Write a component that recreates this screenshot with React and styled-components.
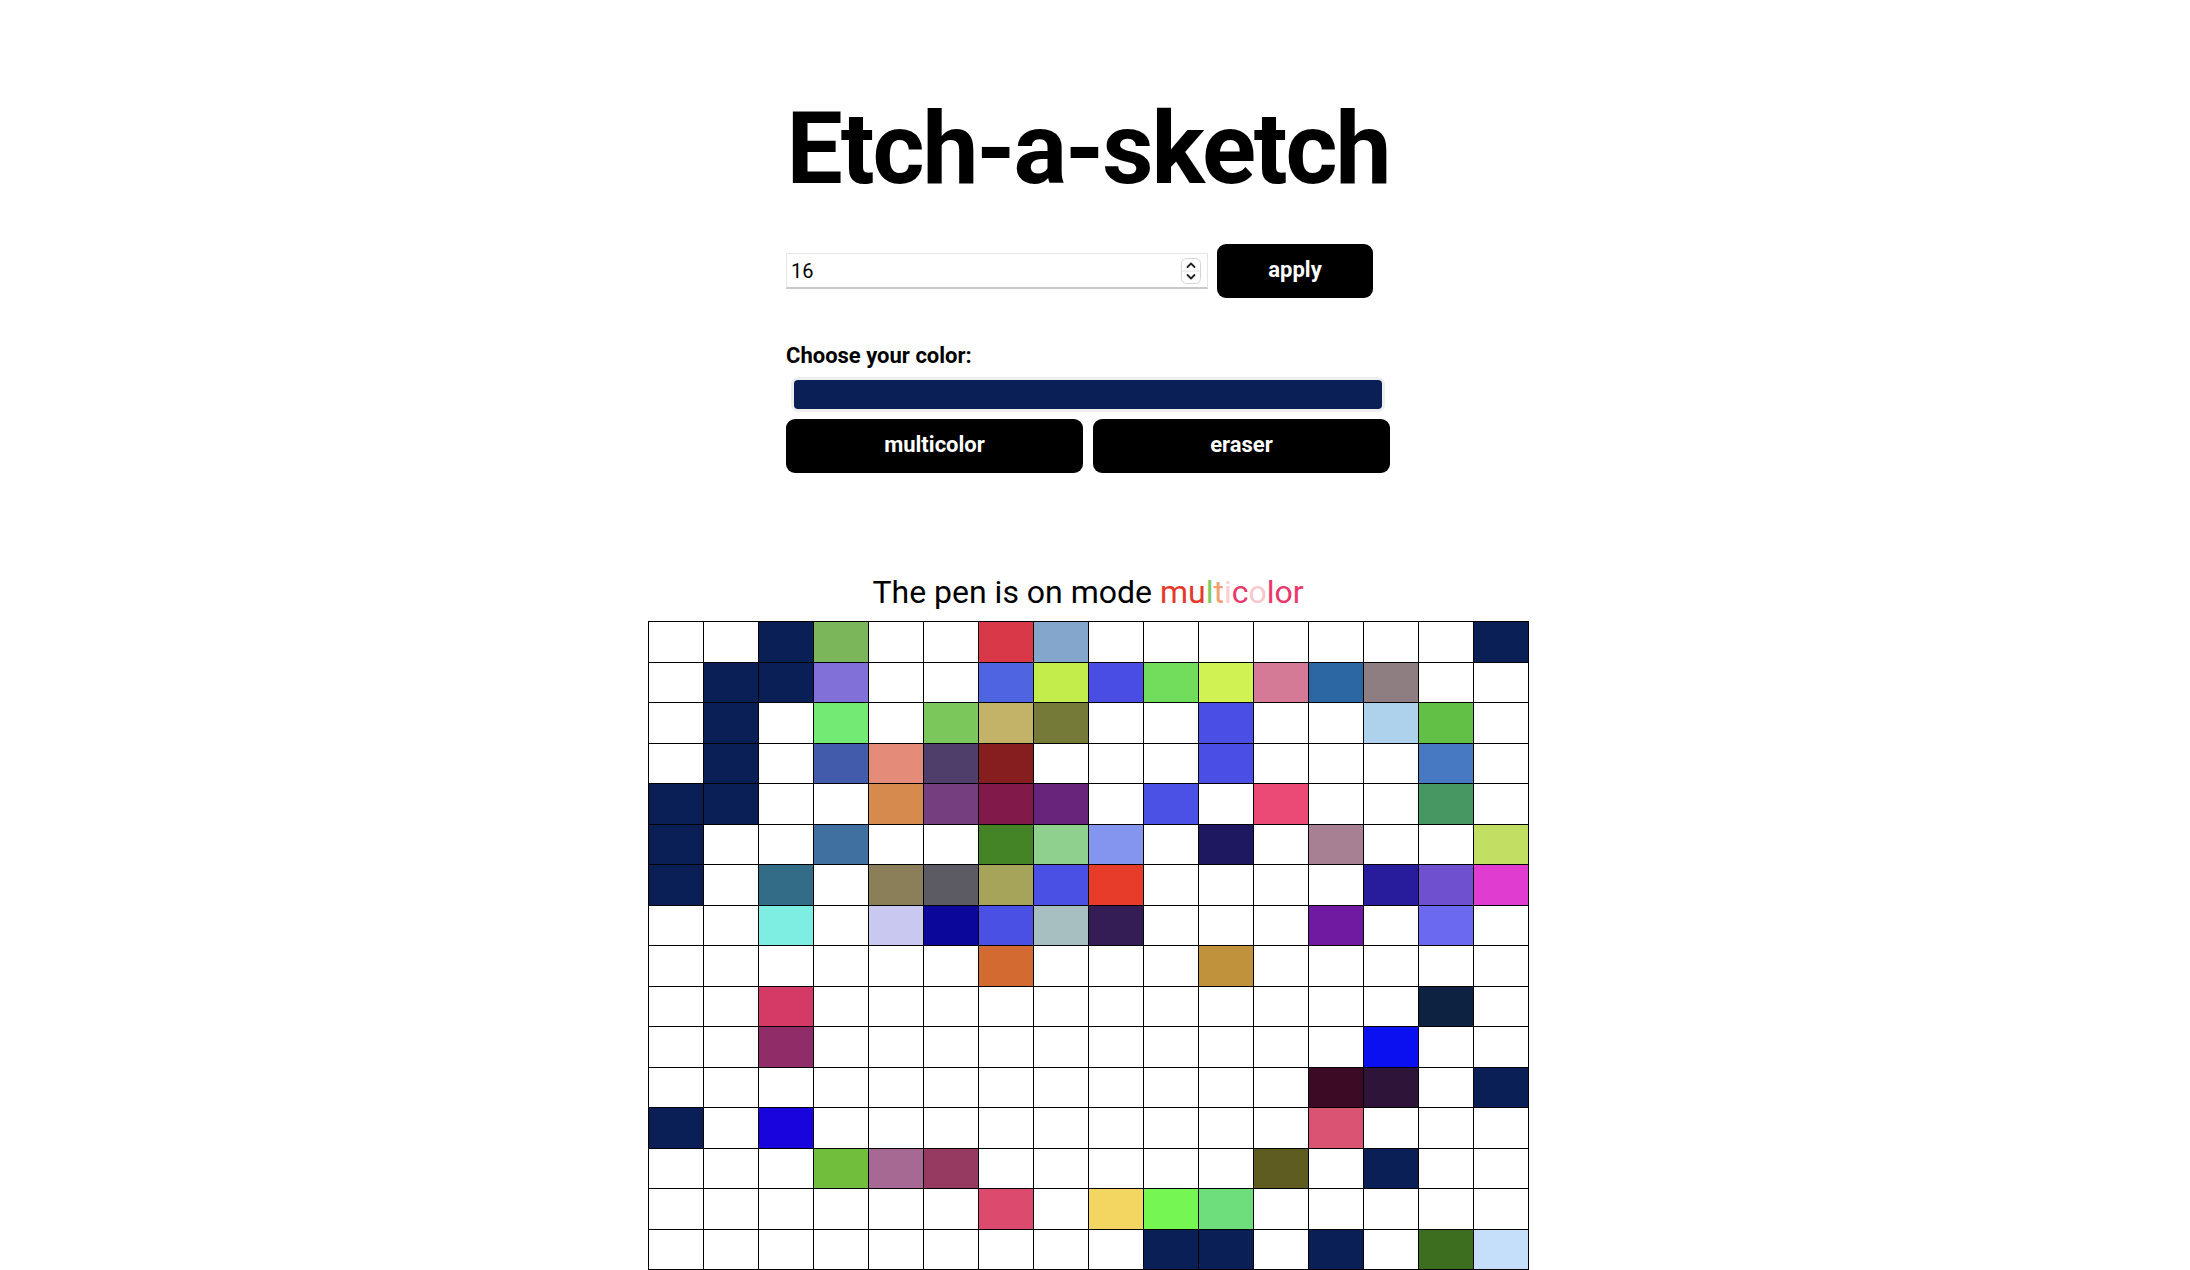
import React from 'react'
import styled, { createGlobalStyle } from 'styled-components'

const N = '#0a1f55'

const board = [
  ['', '', N, '#7bb65a', '', '', '#d93848', '#84a6cc', '', '', '', '', '', '', '', N],
  ['', N, N, '#8070d8', '', '', '#4f64e0', '#c2ed4b', '#4a4de4', '#72dc5c', '#d0f253', '#d57a96', '#2d67a3', '#8e7e82', '', ''],
  ['', N, '', '#73ea74', '', '#7cc75c', '#c2b368', '#767a38', '', '', '#4a4ee4', '', '', '#afd2ec', '#62c046', ''],
  ['', N, '', '#425cab', '#e48b7a', '#4e3e69', '#861e20', '', '', '', '#4a4ee4', '', '', '', '#4779c2', ''],
  [N, N, '', '', '#d78a4e', '#753f7f', '#811a4a', '#68247a', '', '#4a51e4', '', '#ea4a75', '', '', '#479763', ''],
  [N, '', '', '#3f70a0', '', '', '#448426', '#90d08e', '#8495f0', '', '#1e1860', '', '#a78094', '', '', '#c2de63'],
  [N, '', '#336c87', '', '#8a7f59', '#5c5b63', '#a6a35a', '#4a50e4', '#e83c2a', '', '', '', '', '#281c9c', '#6f50ce', '#e03dd0'],
  ['', '', '#7eeee2', '', '#c9c8f0', '#0a079a', '#4b50e4', '#a7bfc1', '#341c55', '', '', '', '#6f1aa0', '', '#6a69f0', ''],
  ['', '', '', '', '', '', '#d36a32', '', '', '', '#c0923c', '', '', '', '', ''],
  ['', '', '#d53a66', '', '', '', '', '', '', '', '', '', '', '', '#0c2240', ''],
  ['', '', '#902d68', '', '', '', '', '', '', '', '', '', '', '#0a10f0', '', ''],
  ['', '', '', '', '', '', '', '', '', '', '', '', '#3c0a24', '#2e1438', '', N],
  [N, '', '#1a04de', '', '', '', '', '', '', '', '', '', '#da5372', '', '', ''],
  ['', '', '', '#70be3c', '#a66994', '#963a62', '', '', '', '', '', '#5e5c20', '', N, '', ''],
  ['', '', '', '', '', '', '#dc4a6e', '', '#f3d562', '#76f652', '#6ede7c', '', '', '', '', ''],
  ['', '', '', '', '', '', '', '', '', N, N, '', N, '', '#3d6e20', '#c5dffa'],
]

const rainbow = [
  ['m', '#e5392b'], ['u', '#e5392b'], ['l', '#7ccb5e'], ['t', '#f2a06e'], ['i', '#f9cfd0'],
  ['c', '#e8386b'], ['o', '#f8c8cc'], ['l', '#e8386b'], ['o', '#e8386b'], ['r', '#ec3a6c'],
]

const GlobalStyle = createGlobalStyle`
  * { box-sizing: border-box; }
  body {
    margin: 0;
    background: #fff;
    font-family: Roboto, "Liberation Sans", sans-serif;
    color: #000;
  }
`

const Page = styled.div`
  width: 2176px;
  display: flex;
  flex-direction: column;
  align-items: center;
`

const Title = styled.h1`
  margin: 99px 0 0;
  font-size: 100px;
  line-height: 100px;
  font-weight: 700;
  letter-spacing: -2.1px;
`

const Controls = styled.div`
  width: 604px;
  display: flex;
  flex-direction: column;
  margin-top: 45px;
`

const SizeRow = styled.div`
  display: flex;
  align-items: center;
  gap: 9px;
`

const NumberField = styled.div`
  position: relative;
  width: 422px;
  height: 36px;
  border: 1px solid #e6e6e6;
  border-bottom: 2px solid #c9c9c9;
  background: #fff;
  display: flex;
  align-items: center;
  padding-left: 4px;
  font-size: 20px;
`

const Spinner = styled.svg`
  position: absolute;
  right: 6px;
  top: 4px;
`

const Button = styled.button`
  height: 54px;
  width: ${p => p.$w || 'auto'};
  flex: ${p => p.$grow ? 1 : 'none'};
  border: none;
  border-radius: 9px;
  background: #000;
  color: #fff;
  font-family: Roboto, "Liberation Sans", sans-serif;
  font-weight: 700;
  font-size: 22px;
  padding: 0 0 4px;
`

const Label = styled.div`
  margin-top: 45px;
  font-size: 22px;
  line-height: 26px;
  font-weight: 700;
`

const ColorWell = styled.div`
  margin: 8px 5px 0;
  height: 35px;
  padding: 3px;
  border-radius: 7px;
  background: #efefef;
`

const Swatch = styled.div`
  height: 100%;
  border-radius: 4px;
  background: ${p => p.$color};
`

const ModeRow = styled.div`
  display: flex;
  gap: 10px;
  margin-top: 7px;
`

const Status = styled.div`
  margin-top: 101px;
  font-size: 32px;
  line-height: 36px;
`

const Letter = styled.span`
  color: ${p => p.$c};
`

const Board = styled.div`
  margin-top: 11px;
  display: grid;
  grid-template-columns: repeat(16, 54px);
  grid-auto-rows: 39.5px;
  gap: 1px;
  padding: 1px;
  background: #000;
`

const Cell = styled.div`
  background: ${p => p.$fill || '#fff'};
`

export default function App() {
  return (
    <Page>
      <GlobalStyle />
      <Title>Etch-a-sketch</Title>
      <Controls>
        <SizeRow>
          <NumberField>
            16
            <Spinner width="20" height="26" viewBox="0 0 20 26">
              <rect x="0.5" y="0.5" width="19" height="25" rx="5" fill="#fff" stroke="#d4d4d4" />
              <line x1="1" y1="13" x2="19" y2="13" stroke="#e2e2e2" />
              <path d="M6.5 9 L10 5.5 L13.5 9" fill="none" stroke="#222" strokeWidth="1.8" strokeLinecap="round" strokeLinejoin="round" />
              <path d="M6.5 17 L10 20.5 L13.5 17" fill="none" stroke="#222" strokeWidth="1.8" strokeLinecap="round" strokeLinejoin="round" />
            </Spinner>
          </NumberField>
          <Button $w="156px">apply</Button>
        </SizeRow>
        <Label>Choose your color:</Label>
        <ColorWell>
          <Swatch $color={N} />
        </ColorWell>
        <ModeRow>
          <Button $grow>multicolor</Button>
          <Button $grow>eraser</Button>
        </ModeRow>
      </Controls>
      <Status>
        The pen is on mode{' '}
        {rainbow.map(([ch, c], i) => <Letter key={i} $c={c}>{ch}</Letter>)}
      </Status>
      <Board>
        {board.flatMap((row, r) => row.map((c, k) => <Cell key={r + '-' + k} $fill={c} />))}
      </Board>
    </Page>
  )
}
